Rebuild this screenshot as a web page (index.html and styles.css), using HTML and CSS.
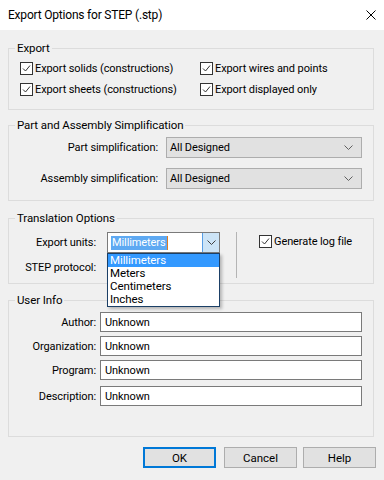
FILE: index.html
```html
<!DOCTYPE html>
<html lang="en">
<head>
    <meta charset="UTF-8">
    <meta name="viewport" content="width=device-width, initial-scale=1.0">
    <title>Export Options for STEP (.stp)</title>

    <link rel="stylesheet" href="styles.css">
</head>
<body>
    <div class="dialog">
        <div class="titlebar">
            <span class="title">Export Options for STEP (.stp)</span>
            <svg class="close" width="10" height="10" viewBox="0 0 10 10">
                <path d="M0.5 0.5 L9.5 9.5 M9.5 0.5 L0.5 9.5" stroke="#000" stroke-width="1" fill="none"/>
            </svg>
        </div>

        <div class="content">
            <!-- Export -->
            <fieldset class="group g-export">
                <legend>Export</legend>
                <div class="check-grid">
                    <label class="check"><span class="box"><svg width="11" height="11" viewBox="0 0 11 11"><path d="M2 5.5 L4.5 8 L9 2.5" stroke="#333" fill="none"/></svg></span>Export solids (constructions)</label>
                    <label class="check"><span class="box"><svg width="11" height="11" viewBox="0 0 11 11"><path d="M2 5.5 L4.5 8 L9 2.5" stroke="#333" fill="none"/></svg></span>Export wires and points</label>
                    <label class="check"><span class="box"><svg width="11" height="11" viewBox="0 0 11 11"><path d="M2 5.5 L4.5 8 L9 2.5" stroke="#333" fill="none"/></svg></span>Export sheets (constructions)</label>
                    <label class="check"><span class="box"><svg width="11" height="11" viewBox="0 0 11 11"><path d="M2 5.5 L4.5 8 L9 2.5" stroke="#333" fill="none"/></svg></span>Export displayed only</label>
                </div>
            </fieldset>

            <!-- Part and Assembly Simplification -->
            <fieldset class="group g-simplify">
                <legend>Part and Assembly Simplification</legend>
                <div class="simp-row">
                    <span class="simp-label">Part simplification:</span>
                    <div class="combo">
                        <span>All Designed</span>
                        <svg class="chev" width="9" height="5" viewBox="0 0 9 5"><path d="M0.5 0.5 L4.5 4.5 L8.5 0.5" stroke="#606060" fill="none"/></svg>
                    </div>
                </div>
                <div class="simp-row">
                    <span class="simp-label">Assembly simplification:</span>
                    <div class="combo">
                        <span>All Designed</span>
                        <svg class="chev" width="9" height="5" viewBox="0 0 9 5"><path d="M0.5 0.5 L4.5 4.5 L8.5 0.5" stroke="#606060" fill="none"/></svg>
                    </div>
                </div>
            </fieldset>

            <!-- Translation Options -->
            <fieldset class="group g-translate">
                <legend>Translation Options</legend>
                <div class="translate-body">
                    <div class="translate-fields">
                        <div class="trans-row">
                            <span class="trans-label">Export units:</span>
                            <div class="combo-edit">
                                <div class="edit-text"><span class="sel">Millimeters</span><span class="caret"></span></div>
                                <div class="edit-btn">
                                    <svg width="9" height="5" viewBox="0 0 9 5"><path d="M0.5 0.5 L4.5 4.5 L8.5 0.5" stroke="#404040" fill="none"/></svg>
                                </div>
                                <ul class="droplist">
                                    <li class="hl">Millimeters</li>
                                    <li>Meters</li>
                                    <li>Centimeters</li>
                                    <li>Inches</li>
                                </ul>
                            </div>
                        </div>
                        <div class="trans-row">
                            <span class="trans-label">STEP protocol:</span>
                            <div class="combo-plain"></div>
                        </div>
                    </div>
                    <div class="vsep"></div>
                    <label class="check log"><span class="box"><svg width="11" height="11" viewBox="0 0 11 11"><path d="M2 5.5 L4.5 8 L9 2.5" stroke="#333" fill="none"/></svg></span>Generate log file</label>
                </div>
            </fieldset>

            <!-- User Info -->
            <fieldset class="group g-user">
                <legend>User Info</legend>
                <div class="user-row">
                    <span class="user-label">Author:</span>
                    <div class="textbox">Unknown</div>
                </div>
                <div class="user-row">
                    <span class="user-label">Organization:</span>
                    <div class="textbox">Unknown</div>
                </div>
                <div class="user-row">
                    <span class="user-label">Program:</span>
                    <div class="textbox">Unknown</div>
                </div>
                <div class="user-row last">
                    <span class="user-label">Description:</span>
                    <div class="textbox">Unknown</div>
                </div>
            </fieldset>
        </div>

        <div class="buttons">
            <button class="btn default">OK</button>
            <button class="btn cancel">Cancel</button>
            <button class="btn">Help</button>
        </div>
    </div>
</body>
</html>
```

FILE: styles.css
```css
* {box-sizing: border-box;}

body {
    margin: 0;
    font-family: Roboto, "Liberation Sans", sans-serif;
    font-size: 11px;
    letter-spacing: -0.1px;
    color: #000;
}

.dialog {
    width: 384px;
    height: 480px;
    background: #f0f0f0;
    white-space: nowrap;
}

.titlebar {
    height: 30px;
    background: #fff;
    display: flex;
    align-items: center;
    justify-content: space-between;
    padding: 0 8px 0 8px;
}

.title {font-size: 12px; letter-spacing: -0.2px;}

.close {margin-top: -1px;}

.content {padding: 11px 10px 0 8px;}

/* groups */
.group {
    margin: 0;
    min-width: 0;
    border: 1px solid #dcdcdc;
    padding: 5px 11px 12px 11px;
}

.group legend {
    line-height: 14px;
    padding: 0 2px;
    margin-left: -5px;
    font-size: 11.5px;
}

.g-simplify {margin-top: 8px; padding-bottom: 11px;}
.g-translate {margin-top: 10px; padding-top: 7px; padding-bottom: 5px;}
.g-user {margin-top: 9px; padding-bottom: 30px;}

/* checkboxes */
.check-grid {
    display: grid;
    grid-template-columns: 180px 1fr;
    row-gap: 5px;
}

.check {
    display: flex;
    align-items: center;
    height: 16px;
}

.box {
    width: 13px;
    height: 13px;
    border: 1px solid #333;
    background: #fff;
    margin-right: 2px;
    display: flex;
    align-items: center;
    justify-content: center;
}

.box svg {display: block;}

/* simplification combos */
.simp-row {
    display: flex;
    align-items: center;
}

.simp-row + .simp-row {margin-top: 10px;}

.simp-label {
    flex: 1;
    text-align: right;
    margin-right: 8px;
}

.combo {
    width: 196px;
    height: 21px;
    background: #e1e1e1;
    border: 1px solid #adadad;
    display: flex;
    align-items: center;
    justify-content: space-between;
    padding: 0 8px 0 3px;
}

.chev {display: block;}

/* translation */
.translate-body {
    display: flex;
    align-items: flex-start;
}

.trans-row {
    display: flex;
    align-items: center;
}

.trans-row + .trans-row {margin-top: 4px;}

.trans-label {
    width: 76px;
    text-align: right;
    margin-right: 11px;
}

.combo-edit {
    position: relative;
    width: 113px;
    height: 21px;
    border: 1px solid #7a7a7a;
    background: #fff;
    display: flex;
}

.edit-text {
    flex: 1;
    display: flex;
    align-items: center;
    padding-left: 3px;
}

.sel {
    background: #5ea9f2;
    color: #fff;
    line-height: 14px;
    padding: 0 1px;
}

.caret {
    width: 1px;
    height: 14px;
    background: #e07b20;
}

.edit-btn {
    width: 17px;
    background: #cce4f7;
    border-left: 1px solid #569de5;
    display: flex;
    align-items: center;
    justify-content: center;
}

.droplist {
    position: absolute;
    left: -1px;
    top: 20px;
    width: 113px;
    margin: 0;
    padding: 0;
    list-style: none;
    background: #fff;
    border: 1px solid #1b3f66;
    box-shadow: 2px 2px 3px rgba(0, 0, 0, 0.25);
    z-index: 2;
    font-size: 11.5px;
}

.droplist li {
    line-height: 13px;
    height: 13px;
    padding-left: 2px;
}

.droplist .hl {
    background: #3399ff;
    color: #fff;
}

.combo-plain {
    width: 113px;
    height: 21px;
    background: #e1e1e1;
    border: 1px solid #adadad;
}

.vsep {
    width: 1px;
    height: 46px;
    background: #b4b4b4;
    margin-left: 16px;
    margin-right: 22px;
}

.check.log {margin-top: 1px;}

/* user info */
.user-row {
    display: flex;
    align-items: center;
    margin-top: 4px;
}

.user-row:first-of-type {margin-top: 0;}
.user-row.last {margin-top: 6px;}

.user-label {
    width: 76px;
    text-align: right;
    margin-right: 4px;
}

.textbox {
    flex: 1;
    height: 20px;
    background: #fff;
    border: 1px solid #7a7a7a;
    padding-left: 4px;
    display: flex;
    align-items: center;
}

/* buttons */
.buttons {
    display: flex;
    justify-content: flex-end;
    margin-top: 10px;
    padding-right: 8px;
}

.btn {
    width: 73px;
    height: 21px;
    background: #e1e1e1;
    border: 1px solid #adadad;
    font-family: inherit;
    font-size: 11.5px;
    padding: 0;
    color: #000;
}

.btn.default {
    border: 2px solid #0078d7;
    margin-right: 8px;
}

.btn.cancel {margin-right: 6px;}
```
